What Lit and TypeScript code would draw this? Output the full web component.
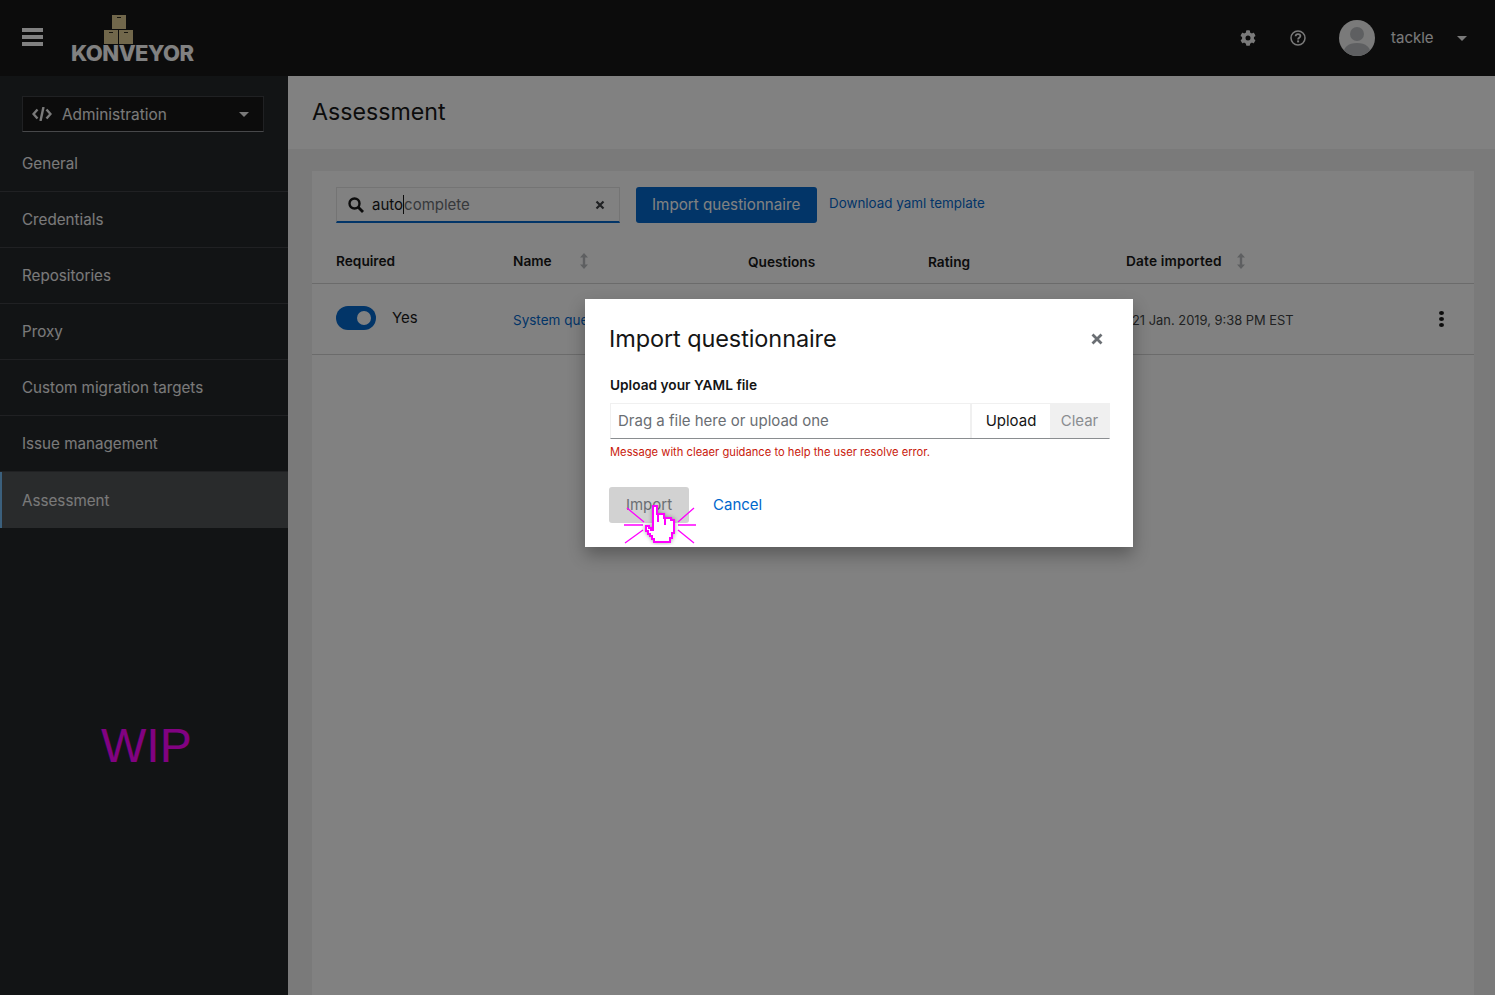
import { LitElement, html, css } from "lit";
import { customElement } from "lit/decorators.js";

const navItems = ["General", "Credentials", "Repositories", "Proxy", "Custom migration targets", "Issue management", "Assessment"];

const sortIcon = html`<svg class="sort" width="8" height="16" viewBox="0 0 8 16"><path d="M4 0 8 4.500H5.200v7H8L4 16 0 11.500H2.800v-7H0z" fill="currentColor"/></svg>`;

@customElement("app-root")
export class AppRoot extends LitElement {
  static styles = css`
    :host { display: block; position: relative; width: 1495px; height: 995px; overflow: hidden; font-family: Inter, sans-serif; color: #151515; background: #f0f0f0; }
    .header { height: 76px; background: #151515; display: flex; align-items: center; color: #fff; }
    .burger { width: 21px; margin-left: 22px; display: flex; flex-direction: column; gap: 3px; margin-top: -2px; }
    .burger i { display: block; height: 4px; background: #fff; }
    .logo { margin-left: 28px; width: 124px; height: 50px; position: relative; top: 2px; }
    .logo svg { position: absolute; left: 33px; top: 0; }
    .logo span { position: absolute; left: 0; top: 26px; font: 800 22px/24px Inter, sans-serif; letter-spacing: -0.5px; color: #fff; }
    .tools { margin-left: auto; display: flex; align-items: center; padding-right: 28px; }
    .tools .gear { margin-right: 34px; }
    .avatar { margin-left: 33px; width: 36px; height: 36px; border-radius: 50%; overflow: hidden; }
    .user { margin-left: 16px; font-size: 15px; color: #f0f0f0; width: 66px; margin-top: -2px; }
    .caret { width: 0; height: 0; border-left: 5.500px solid transparent; border-right: 5.500px solid transparent; border-top: 5.500px solid #f0f0f0; }
    .body { display: flex; height: 919px; }
    .side { width: 288px; background: #212427; flex: none; position: relative; }
    .switch { margin: 20px 24px 4px 22px; height: 36px; box-sizing: border-box; background: #151515; border: 1px solid #3c3f42; border-bottom-color: #8a8d90; display: flex; align-items: center; padding: 0 14px 0 9px; font-size: 15.400px; color: #f0f0f0; }
    .switch svg { margin-right: 10px; }
    .switch .caret { margin-left: auto; }
    .nav div { height: 55px; display: flex; align-items: center; padding-left: 22px; border-bottom: 1px solid #3c3f42; font-size: 15.200px; color: #f0f0f0; }
    .nav div:last-child { background: #4f5255; border-left: 2px solid #73bcf7; padding-left: 20px; border-bottom: 0; height: 56px; }
    .wip { position: absolute; left: 101px; top: 640px; font: 400 48px/60px "Liberation Sans", sans-serif; color: #ff00ff; }
    .main { flex: 1; display: flex; flex-direction: column; }
    .title { height: 71px; background: #fff; padding: 0 0 2px 24px; display: flex; align-items: center; font-size: 23.200px; font-weight: 400; }
    .content { flex: 1; padding: 22px 21px 0 24px; }
    .card { background: #fff; height: 100%; }
    .toolbar { display: flex; align-items: flex-start; padding: 16px 24px 0; height: 72px; box-sizing: border-box; }
    .search { width: 284px; height: 36px; box-sizing: border-box; border: 1px solid #e4e4e4; border-bottom: 2px solid #06c; display: flex; align-items: center; padding: 0 14px 0 11px; font-size: 15px; }
    .search .typed { margin-left: 8px; border-right: 1px solid #151515; }
    .search .rest { color: #6a6e73; }
    .search .x { margin-left: auto; }
    .btn-primary { margin-left: 16px; height: 36px; box-sizing: border-box; width: 181px; padding: 0 0 2px 16px; display: flex; align-items: center; background: #06c; color: #fff; border-radius: 3px; font-size: 15.200px; }
    .link { color: #06c; }
    .dl { margin-left: 12px; font-size: 13.400px; line-height: 33px; }
    .cols { display: grid; grid-template-columns: 177px 235px 180px 198px 1fr; padding: 0 24px 4px; font-size: 13.700px; font-weight: 600; height: 36px; align-items: center; border-bottom: 1px solid #d2d2d2; }
    .cols span { display: flex; align-items: center; }
    .cols .low { margin-top: 2px; }
    .sort { color: #b8bbbe; margin-left: 28px; }
    .cols .date { letter-spacing: 0.15px; }
    .cols .date .sort { margin-left: 15px; }
    .row { display: grid; grid-template-columns: 177px 619px 1fr auto; padding: 0 24px; height: 70px; border-bottom: 1px solid #d2d2d2; align-items: center; font-size: 13.500px; }
    .req { display: flex; align-items: center; gap: 16px; font-size: 15px; margin-top: -3px; }
    .toggle { width: 40px; height: 24px; border-radius: 12px; background: #06c; position: relative; }
    .toggle i { position: absolute; right: 5px; top: 5px; width: 14px; height: 14px; border-radius: 50%; background: #fff; }
    .row .link { margin-top: 2px; }
    .row .date { color: #3c3f42; font-size: 12.900px; margin-top: 2px; }
    .kebab { display: flex; flex-direction: column; gap: 2px; margin-right: 6px; margin-top: -1px; }
    .kebab i { width: 5px; height: 4px; border-radius: 50%; background: #151515; }
    .backdrop { position: absolute; inset: 0; background: rgba(3, 3, 3, 0.5); }
    .modal { position: absolute; left: 585px; top: 299px; width: 548px; height: 248px; background: #fff; padding: 24px 23px 24px 24px; box-sizing: border-box; box-shadow: 0 8px 16px rgba(3, 3, 3, 0.3); }
    .modal-head { display: flex; justify-content: space-between; align-items: center; height: 32px; }
    .modal h2 { margin: -2px 0 0; font-size: 23.500px; font-weight: 400; letter-spacing: -0.1px; }
    .close { margin-right: 7px; }
    .label { margin: 20px 0 0 1px; font-size: 13.700px; font-weight: 600; line-height: 20px; }
    .file { margin: 8px 0 0 1px; height: 36px; display: flex; border: 1px solid #f0f0f0; border-bottom: 1px solid #8a8d90; font-size: 15px; box-sizing: border-box; line-height: 34px; }
    .file .ph { flex: 1; padding-left: 7px; color: #6a6e73; border-right: 2px solid #f0f0f0; }
    .file .up { width: 78px; text-align: center; }
    .file .clr { width: 59px; text-align: center; background: #f0f0f0; color: #8a8d90; }
    .err { margin: 6px 0 0 1px; font-size: 11.200px; line-height: 14px; color: #c9190b; }
    .actions { margin-top: 28px; display: flex; align-items: center; font-size: 15px; }
    .import { width: 80px; height: 36px; box-sizing: border-box; padding-bottom: 2px; border-radius: 3px; background: #d2d2d2; color: #6a6e73; display: flex; align-items: center; justify-content: center; }
    .cancel { margin-left: 24px; margin-top: -2px; }
    .hand { position: absolute; left: 624px; top: 505px; }
    .hand .palm { filter: drop-shadow(0 0 2px rgba(0, 0, 0, 0.35)); }
  `;

  render() {
    return html`
      <div class="header">
        <div class="burger"><i></i><i></i><i></i></div>
        <div class="logo">
          <svg width="60" height="30" viewBox="0 0 60 30">
            <g fill="#dfca93">
              <rect x="8" y="0" width="14" height="14"/><rect x="0" y="15" width="14" height="14"/><rect x="15" y="15" width="14" height="14"/>
            </g>
            <g fill="#2a2618"><rect x="13" y="2" width="4" height="1"/><rect x="5" y="17" width="4" height="1"/><rect x="20" y="17" width="4" height="1"/></g>
          </svg>
          <span>KONVEYOR</span>
        </div>
        <div class="tools">
          <svg class="gear" width="16" height="16" viewBox="0 0 512 512"><path fill="#f0f0f0" d="M487 316l-42-25c4-23 4-47 0-70l42-25c5-3 7-9 5-14-11-35-30-67-54-93-4-4-10-5-15-2l-42 24c-18-15-38-27-61-35V27c0-6-4-11-9-12-37-8-74-8-109 0-5 1-9 6-9 12v49c-22 8-43 20-61 35L90 87c-5-3-11-2-15 2-24 26-43 58-54 93-2 5 0 11 5 14l42 25c-4 23-4 47 0 70l-42 25c-5 3-7 9-5 14 11 35 30 67 54 93 4 4 10 5 15 2l42-24c18 15 38 27 61 35v49c0 6 4 11 9 12 37 8 74 8 109 0 5-1 9-6 9-12v-49c22-8 43-20 61-35l42 24c5 3 11 2 15-2 24-26 43-58 54-93 2-5 0-11-5-14zM256 336a80 80 0 1 1 0-160 80 80 0 0 1 0 160z"/></svg>
          <svg width="16" height="16" viewBox="0 0 16 16"><circle cx="8" cy="8" r="7" fill="none" stroke="#f0f0f0" stroke-width="1.500"/><path d="M5.600 6.300C5.700 4.800 6.800 4.100 8 4.100c1.400 0 2.400.8 2.400 2 0 1.700-2.300 1.700-2.300 3.300" fill="none" stroke="#f0f0f0" stroke-width="1.800"/><rect x="7.100" y="10.400" width="2" height="2" fill="#f0f0f0"/></svg>
          <div class="avatar">
            <svg width="36" height="36" viewBox="0 0 36 36"><rect width="36" height="36" fill="#f0f0f0"/><circle cx="18" cy="14" r="7" fill="#b8bbbe"/><path d="M4 36c0-9 5-13 14-13s14 4 14 13z" fill="#b8bbbe"/></svg>
          </div>
          <div class="user">tackle</div>
          <div class="caret"></div>
        </div>
      </div>
      <div class="body">
        <div class="side">
          <div class="switch">
            <svg width="20" height="14" viewBox="0 0 20 14"><path d="M5.500 2.500 1.500 7l4 4.500M14.500 2.500l4 4.500-4 4.500" fill="none" stroke="#f0f0f0" stroke-width="2.400"/><path d="M11.500 0 8.500 14" stroke="#f0f0f0" stroke-width="2.400"/></svg>
            Administration
            <div class="caret"></div>
          </div>
          <div class="nav">${navItems.map((n) => html`<div>${n}</div>`)}</div>
          <div class="wip">WIP</div>
        </div>
        <div class="main">
          <div class="title">Assessment</div>
          <div class="content">
            <div class="card">
              <div class="toolbar">
                <div class="search">
                  <svg width="16" height="16" viewBox="0 0 16 16"><circle cx="6.500" cy="6.500" r="5" fill="none" stroke="#151515" stroke-width="2.400"/><path d="M10 10l5 5" stroke="#151515" stroke-width="2.800"/></svg>
                  <span class="typed">auto</span><span class="rest">complete</span>
                  <svg class="x" width="10" height="10" viewBox="0 0 10 10"><path d="M1.500 1.500l7 7M8.500 1.500l-7 7" stroke="#3c3f42" stroke-width="2.200"/></svg>
                </div>
                <div class="btn-primary">Import questionnaire</div>
                <div class="link dl">Download yaml template</div>
              </div>
              <div class="cols">
                <span>Required</span>
                <span>Name ${sortIcon}</span>
                <span class="low">Questions</span>
                <span class="low">Rating</span>
                <span class="date">Date imported ${sortIcon}</span>
              </div>
              <div class="row">
                <div class="req"><div class="toggle"><i></i></div>Yes</div>
                <div class="link">System questionnaire</div>
                <div class="date">21 Jan. 2019, 9:38 PM EST</div>
                <div class="kebab"><i></i><i></i><i></i></div>
              </div>
            </div>
          </div>
        </div>
      </div>
      <div class="backdrop"></div>
      <div class="modal">
        <div class="modal-head">
          <h2>Import questionnaire</h2>
          <svg class="close" width="12" height="12" viewBox="0 0 12 12"><path d="M1.500 1.500l9 9M10.500 1.500l-9 9" stroke="#6a6e73" stroke-width="2.800"/></svg>
        </div>
        <div class="label">Upload your YAML file</div>
        <div class="file">
          <div class="ph">Drag a file here or upload one</div>
          <div class="up">Upload</div>
          <div class="clr">Clear</div>
        </div>
        <div class="err">Message with cleaer guidance to help the user resolve error.</div>
        <div class="actions">
          <div class="import">Import</div>
          <div class="link cancel">Cancel</div>
        </div>
      </div>
      <svg class="hand" width="72" height="40" viewBox="0 0 72 40">
        <path d="M3 3 20 17M70 3 54 17M0 20H19M54 20H72M1 38 19 25M70 38 54 25" stroke="#ff00ff" stroke-width="1.300" fill="none"/>
        <g class="palm">
          <path shape-rendering="crispEdges" d="M29 1H33V9H40V13H47V15H50V28H48V33H46V37H30V34H28V31H26V29H24V26H22V21H25V23H27V25H29Z" fill="#fff" stroke="#ff00ff" stroke-width="2"/>
          <path shape-rendering="crispEdges" d="M34 10V17M41 13V20" stroke="#ff00ff" stroke-width="2" fill="none"/>
        </g>
      </svg>
    `;
  }
}
